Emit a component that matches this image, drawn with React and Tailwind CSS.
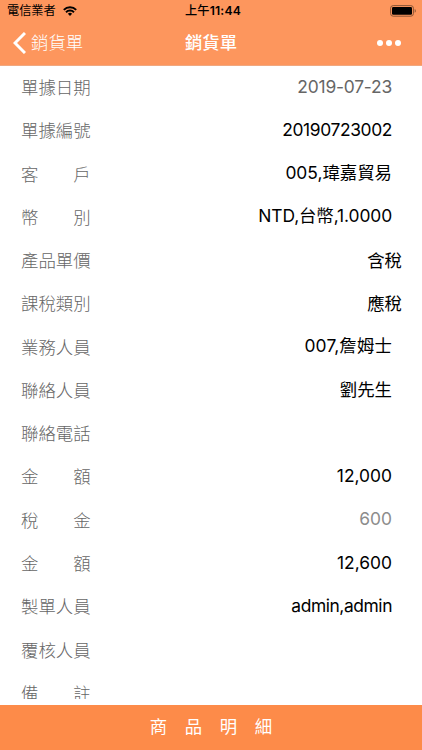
import clsx from 'clsx';

const rows = [
    { label: '單據日期', value: '2019-07-23', tone: 'dim', tracking: 'tracking-[-0.2px]' },
    { label: '單據編號', value: '20190723002', tracking: 'tracking-[-0.36px]' },
    { label: '客戶', value: '005,瑋嘉貿易' },
    { label: '幣別', value: 'NTD,台幣,1.0000', tracking: 'tracking-[-0.1px]' },
    { label: '產品單價', value: '含稅', wide: true },
    { label: '課稅類別', value: '應稅', wide: true },
    { label: '業務人員', value: '007,詹姆士', tracking: 'tracking-[0.15px]' },
    { label: '聯絡人員', value: '劉先生', lower: true },
    { label: '聯絡電話', value: '' },
    { label: '金額', value: '12,000' },
    { label: '稅金', value: '600', tone: 'light' },
    { label: '金額', value: '12,600' },
    { label: '製單人員', value: 'admin,admin', tracking: 'tracking-[-0.42px]' },
    { label: '覆核人員', value: '' },
    { label: '備註', value: '' },
];

const toneClassMap = {
    dim: 'text-[#666666]',
    light: 'text-[#8c8c8c]',
    normal: 'text-black',
};

function WifiIcon() {
    return (
        <svg width="14" height="10" viewBox="0 0 14 10" fill="none" stroke="black" strokeWidth="2">
            <path d="M0.8 3.9a8.8 8.8 0 0 1 12.4 0" />
            <path d="M3 6.2a5.7 5.7 0 0 1 8 0" />
            <path d="M7 9.9L4.9 7.8a3 3 0 0 1 4.2 0z" fill="black" stroke="none" />
        </svg>
    );
}

function BatteryIcon() {
    return (
        <svg width="27" height="12" viewBox="0 0 27 12">
            <rect x="0.6" y="0.6" width="22.8" height="10.6" rx="2.6" fill="none" stroke="#8a5535" strokeWidth="1" />
            <rect x="2" y="2" width="20" height="7.8" rx="1.2" fill="black" />
            <path d="M24.7 4v3.8c1.5-.6 1.5-3.2 0-3.8z" fill="#8a5535" />
        </svg>
    );
}

function Row({ label, value, tone = 'normal', tracking, wide, lower }) {
    return (
        <div className="flex h-[43.28px] shrink-0 items-center justify-between pl-[21px]">
            <div className="flex w-[69.6px] justify-between pt-px text-[17.4px] font-light text-[#666666]">
                {[...label].map((char, index) => (
                    <span key={index}>{char}</span>
                ))}
            </div>
            <div className={clsx('text-[17.4px]', wide ? 'pr-5' : 'pr-[30px]', !wide && !lower && 'pb-0.5', toneClassMap[tone], tracking)}>
                {value}
            </div>
        </div>
    );
}

export default function App() {
    return (
        <div className="flex h-[750px] w-[422px] flex-col overflow-hidden bg-white font-['Inter','Noto_Sans_CJK_TC',sans-serif]">
            <header className="h-[66px] shrink-0 border-b border-[#f0a880] bg-[#fd965d]">
                <div className="grid h-[22px] grid-cols-3 items-center pr-[5px] pl-[7px] text-[12.2px] leading-none text-black">
                    <div className="flex items-center gap-[7px]">
                        <span>電信業者</span>
                        <WifiIcon />
                    </div>
                    <div className="pl-0.5 text-center font-semibold tracking-[0.2px]">
                        <span className="font-medium">上午</span>11:44
                    </div>
                    <div className="flex justify-end"><BatteryIcon /></div>
                </div>
                <div className="grid h-[43px] grid-cols-[1fr_auto_1fr] items-center pr-[21px] pl-[21px] text-[17.4px] text-white">
                    <div className="-ml-2 flex items-center gap-[5px]">
                        <svg width="13" height="22" viewBox="0 0 13 22" fill="none" stroke="white" strokeWidth="3">
                            <path d="M12 1L2 11l10 10" />
                        </svg>
                        <span className="font-light">銷貨單</span>
                    </div>
                    <div className="text-center font-medium">銷貨單</div>
                    <div className="flex justify-end gap-[3px] pb-0.5">
                        <span className="size-1.5 rounded-full bg-white" />
                        <span className="size-1.5 rounded-full bg-white" />
                        <span className="size-1.5 rounded-full bg-white" />
                    </div>
                </div>
            </header>

            <main className="flex h-[633px] shrink-0 flex-col overflow-hidden">
                {rows.map((row, index) => (
                    <Row key={index} {...row} />
                ))}
            </main>

            <footer className="mt-auto flex h-[45px] shrink-0 items-center justify-center gap-[17.6px] bg-[#fd8b49] text-[17.4px] text-white">
                {[...'商品明細'].map((char) => (
                    <span key={char}>{char}</span>
                ))}
            </footer>
        </div>
    );
}
